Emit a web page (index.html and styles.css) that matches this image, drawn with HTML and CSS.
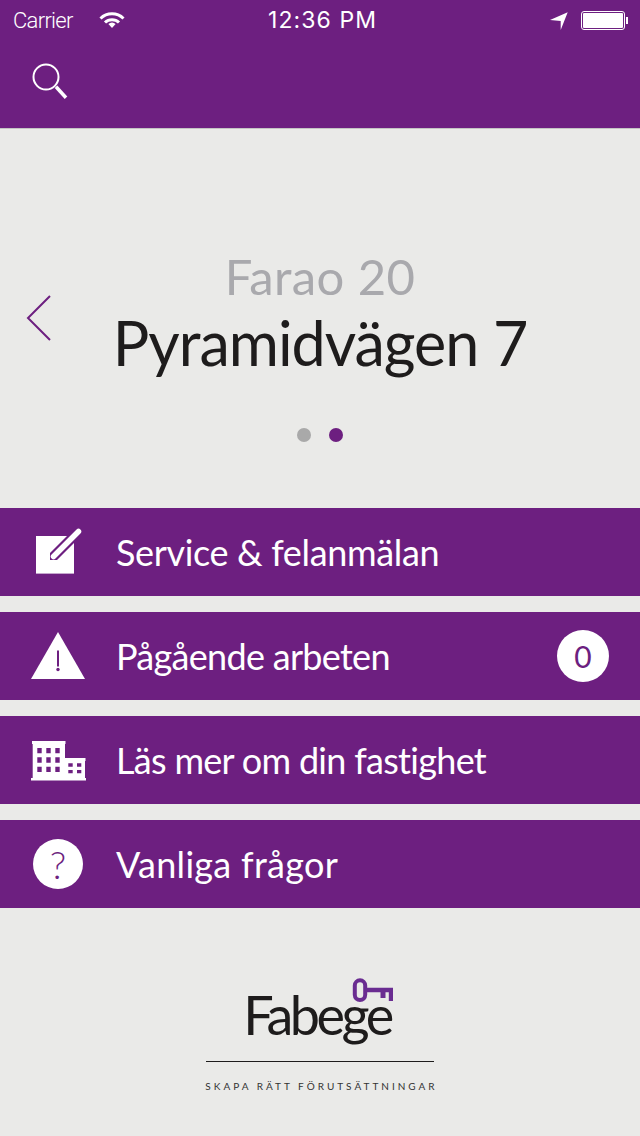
FILE: index.html
```html
<html>
<head>
    <title>Fabege</title>
    <link rel="stylesheet" href="styles.css">
</head>
<body>
    <header class="top">
        <div class="status">
            <span class="carrier">Carrier</span>
            <svg class="wifi" width="26" height="20" viewBox="0 0 26 20">
                <path d="M1.500 8.500a16.500 16.500 0 0 1 23 0" class="wifi-arc"/>
                <path d="M6 12.500a10 10 0 0 1 14 0" class="wifi-arc"/>
                <path d="M13 18l-3.600-4a5 5 0 0 1 7.200 0z" class="wifi-dot"/>
            </svg>
            <span class="time">12:36 PM</span>
            <svg class="arrow" width="20" height="20" viewBox="0 0 20 20">
                <path d="M1 10L18.700 2.300 11.700 20V11z"/>
            </svg>
            <div class="battery"><div class="battery-fill"></div></div>
            <div class="battery-cap"></div>
        </div>
        <div class="nav">
            <svg width="42" height="42" viewBox="0 0 42 42">
                <circle cx="18" cy="17" r="12.500" class="search-ring"/>
                <path d="M28 26.700l10 11" class="search-handle"/>
            </svg>
        </div>
    </header>

    <section class="hero">
        <svg class="back" width="28" height="46" viewBox="0 0 28 46">
            <path d="M25 1L3 23l22 22"/>
        </svg>
        <div class="hero-sub">Farao 20</div>
        <h1 class="hero-title">Pyramidvägen 7</h1>
        <div class="dots">
            <span class="dot"></span>
            <span class="dot dot-on"></span>
        </div>
    </section>

    <nav class="menu">
        <div class="row">
            <svg class="row-icon" width="60" height="60" viewBox="0 0 60 60">
                <rect x="8" y="14" width="38" height="37.600" fill="#fff"/>
                <path d="M22 38v-7L45 8l7 7-23 23z" fill="#6d1f80"/>
                <path d="M25.500 34.500L50.500 9.500" stroke="#fff" stroke-width="5.500" stroke-linecap="round" fill="none"/>
            </svg>
            <span class="row-label">Service &amp; felanmälan</span>
        </div>
        <div class="row">
            <svg class="row-icon" width="60" height="60" viewBox="0 0 60 60">
                <path d="M30 6l27 47H3z" fill="#fff"/>
                <path d="M30 24.500v16" stroke="#6d1f80" stroke-width="2"/>
                <circle cx="30" cy="43.500" r="1.700" fill="#6d1f80"/>
            </svg>
            <span class="row-label row-label-tight">Pågående arbeten</span>
            <span class="badge">0</span>
        </div>
        <div class="row">
            <svg class="row-icon" width="60" height="60" viewBox="0 0 60 60">
                <path fill="#fff" fill-rule="evenodd" d="M4 11h33.500v3H37v14h20.500v3H57v17h1v2.500H3V48h1.700V14H4z
                    M9.300 18v5.300h4.400V18z M18.300 18v5.300h4.400V18z M27.300 18v5.300h4.400V18z
                    M9.300 27.300v5.400h4.400v-5.400z M18.300 27.300v5.400h4.400v-5.400z M27.300 27.300v5.400h4.400v-5.400z
                    M9.300 36.700V42h4.400v-5.300z M18.300 36.700V42h4.400v-5.300z M27.300 36.700V42h4.400v-5.300z
                    M40.300 33.300v3.400h4.400v-3.400z M49 33.300v3.400h4.300v-3.400z
                    M40.300 40v3.300h4.400V40z M49 40v3.300h4.300V40z"/>
            </svg>
            <span class="row-label row-label-tight">Läs mer om din fastighet</span>
        </div>
        <div class="row">
            <div class="help">?</div>
            <span class="row-label row-label-loose">Vanliga frågor</span>
        </div>
    </nav>

    <footer class="foot">
        <svg class="key" width="42" height="26" viewBox="0 0 42 26">
            <rect x="3.800" y="3.300" width="10.400" height="19.700" rx="5.200" class="key-bow"/>
            <path d="M15 10.700H42V24H37.800V15.300H34.500V21H29.500V15.300H15z" class="key-bit"/>
        </svg>
        <div class="logo">Fabege</div>
        <div class="rule"></div>
        <div class="slogan">SKAPA RÄTT FÖRUTSÄTTNINGAR</div>
    </footer>
</body>
</html>
```

FILE: styles.css
```css
body { margin: 0; width: 640px; height: 1136px; overflow: hidden; background-color: #eaeae8; font-family: "Lato", sans-serif; }

.top { background-color: #6d1f80; border-bottom: solid 1px #c4c4c4; }
.status { display: flex; align-items: center; height: 40px; color: #fff; font-family: "Inter", sans-serif; position: relative; padding-left: 13px; }
.carrier { font-family: "Roboto", sans-serif; font-weight: 300; font-size: 22px; letter-spacing: -0.700px; width: 86px; }
.wifi { margin-right: 143px; }
.wifi-arc { fill: none; stroke: #fff; stroke-width: 3; }
.wifi-dot { fill: #fff; }
.time { width: 110px; font-weight: 400; font-size: 23px; letter-spacing: 1.100px; white-space: nowrap; margin-right: 171px; }
.arrow { fill: #fff; margin-right: 12px; }
.battery { width: 40px; height: 15px; border: solid 1px #fff; border-radius: 3px; padding: 1px; }
.battery-fill { width: 100%; height: 100%; background-color: #fff; border-radius: 1px; }
.battery-cap { width: 2px; height: 7px; background-color: #fff; margin-left: 1px; }

.nav { height: 88px; padding-left: 28px; padding-top: 20px; box-sizing: border-box; }
.search-ring { fill: none; stroke: #fff; stroke-width: 2; }
.search-handle { fill: none; stroke: #fff; stroke-width: 3.500; }

.hero { height: 379px; position: relative; box-sizing: border-box; padding-top: 115px; text-align: center; }
.back { position: absolute; left: 25px; top: 166px; }
.back path { fill: none; stroke: #6d1f80; stroke-width: 2; }
.hero-sub { font-size: 49px; line-height: 64px; font-weight: 400; letter-spacing: 0.400px; color: #a9a9ad; }
.hero-title { margin: -3px 0 0; font-size: 61px; line-height: 76px; font-weight: 400; letter-spacing: -1px; color: #1e1c1c; }
.dots { display: flex; justify-content: center; gap: 18px; margin-top: 47px; }
.dot { width: 14px; height: 14px; border-radius: 50%; background-color: #a9a9a9; }
.dot-on { background-color: #6d1f80; }

.menu { display: flex; flex-direction: column; gap: 16px; }
.row { display: flex; align-items: center; height: 88px; padding-left: 28px; background-color: #6d1f80; color: #fff; position: relative; }
.row-icon { margin-right: 28px; flex: none; }
.row-label { font-size: 36px; font-weight: 400; letter-spacing: -0.350px; white-space: nowrap; }
.row-label-tight { letter-spacing: -0.700px; }
.row-label-loose { letter-spacing: 0.300px; }
.help { width: 50px; height: 50px; margin-left: 5px; margin-right: 33px; border-radius: 50%; background-color: #fff; color: #6d1f80; font-size: 38px; font-weight: 300; line-height: 50px; text-align: center; flex: none; }
.badge { position: absolute; left: 557px; top: 18px; width: 52px; height: 52px; border-radius: 50%; background-color: #fff; color: #6d1f80; font-size: 30px; line-height: 52px; font-weight: 400; text-align: center; }

.foot { display: flex; flex-direction: column; align-items: center; padding-top: 69px; }
.key { margin-left: 103px; margin-bottom: -17px; display: block; }
.key-bow { fill: none; stroke: #6a2c91; stroke-width: 4; }
.key-bit { fill: #6a2c91; }
.logo { margin-right: 6px; font-size: 54px; line-height: 58px; color: #1e1c1c; letter-spacing: -3.500px; }
.rule { width: 228px; height: 1px; margin-top: 17px; background-color: #1e1c1c; }
.slogan { margin-top: 18px; padding-left: 3px; font-size: 10px; line-height: 12px; letter-spacing: 3px; color: #333; white-space: nowrap; }
```
